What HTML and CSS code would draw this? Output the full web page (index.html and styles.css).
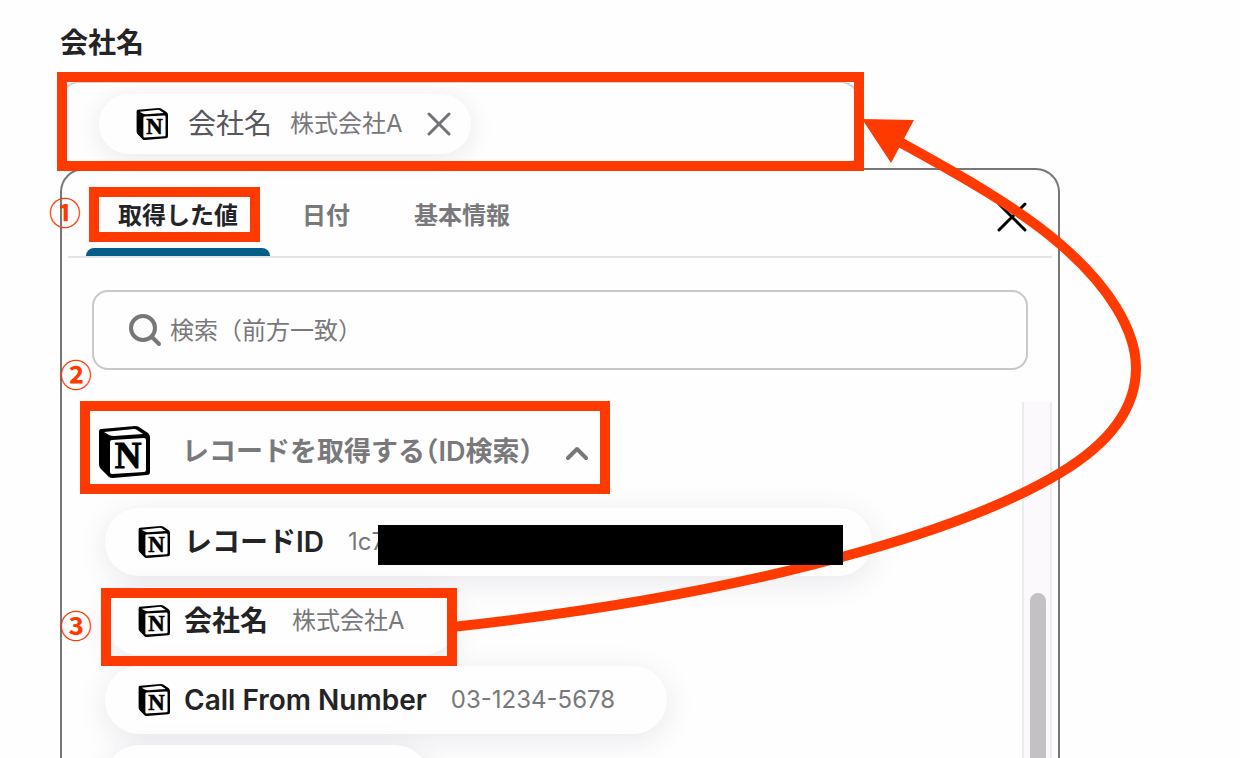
FILE: index.html
```html
<!DOCTYPE html>
<html lang="ja">
<head>
    <meta charset="utf-8">
    <meta name="viewport" content="width=device-width, initial-scale=1">
    <title>会社名</title>
    <link rel="stylesheet" href="styles.css">
</head>
<body>
<svg class="defs" aria-hidden="true">
    <symbol id="icon-notion" viewBox="0 0 52 54">
        <path d="M3 4 L37 1 Q39 1 41 2 L50 8 Q52 10 52 12 L52 47 Q52 50 49 50 L15 53 Q12 53 11 52 L2 43 Q1 41 1 39 L1 7 Q1 4 3 4 Z" fill="#000"/>
        <path d="M6 7 L36 4 Q38 4 39 5 L45 9 L16 11 Q13 11 11 10 Z" fill="#fff"/>
        <path d="M14 15 L46 13 Q48 13 48 15 L48 45 Q48 47 46 47 L14 49 Q12 49 12 47 L12 17 Q12 15 14 15 Z" fill="#fff"/>
        <text x="30" y="43" text-anchor="middle" class="notion-letter">N</text>
    </symbol>
</svg>

<main class="page">
    <div class="form">
        <div class="field-label">会社名</div>

        <div class="field marked">
            <div class="chip">
                <svg class="icon"><use href="#icon-notion"/></svg>
                <span class="chip-name">会社名</span>
                <span class="chip-value">株式会社A</span>
                <button class="icon-btn chip-remove" type="button" aria-label="削除">
                    <svg width="24" height="24" viewBox="0 0 24 24"><path d="M2 2 L22 22 M22 2 L2 22"/></svg>
                </button>
            </div>
        </div>

        <div class="panel">
            <div class="panel-header">
                <div class="tabs">
                    <button class="tab active marked" type="button">取得した値</button>
                    <button class="tab" type="button">日付</button>
                    <button class="tab" type="button">基本情報</button>
                </div>
                <button class="icon-btn panel-close" type="button" aria-label="閉じる">
                    <svg width="30" height="30" viewBox="0 0 30 30"><path d="M2 2 L28 28 M28 2 L2 28"/></svg>
                </button>
            </div>

            <label class="search">
                <svg width="34" height="34" viewBox="0 0 34 34"><circle cx="15" cy="15" r="12"/><path d="M24 24 L31 31"/></svg>
                <input type="text" placeholder="検索（前方一致）" aria-label="検索（前方一致）">
            </label>

            <div class="list">
                <div class="list-body">
                    <button class="group marked" type="button">
                        <svg class="icon-large"><use href="#icon-notion"/></svg>
                        <span class="group-title">レコードを取得する（ID検索）</span>
                        <svg class="chevron" width="24" height="24" viewBox="0 0 24 24"><path d="M3 18 L12 9 L21 18"/></svg>
                    </button>

                    <button class="item" type="button">
                        <svg class="icon"><use href="#icon-notion"/></svg>
                        <span class="item-name">レコードID</span>
                        <span class="item-value">1c7</span>
                        <span class="redacted"></span>
                    </button>
                    <button class="item marked" type="button">
                        <svg class="icon"><use href="#icon-notion"/></svg>
                        <span class="item-name">会社名</span>
                        <span class="item-value">株式会社A</span>
                    </button>
                    <button class="item" type="button">
                        <svg class="icon"><use href="#icon-notion"/></svg>
                        <span class="item-name">Call From Number</span>
                        <span class="item-value">03-1234-5678</span>
                    </button>
                    <div class="item item-next"></div>
                </div>
                <div class="scrollbar"><div class="scrollbar-thumb"></div></div>
            </div>
        </div>
    </div>

    <!-- Annotations -->
    <span class="step step-1">①</span>
    <span class="step step-2">②</span>
    <span class="step step-3">③</span>
    <svg class="arrow" width="1240" height="758" viewBox="0 0 1240 758" aria-hidden="true">
        <path class="arrow-line" d="M452 627 C600 611 740 586 860 552 C960 524 1020 497 1060 473 C1110 443 1136 408 1136 368 C1136 330 1108 285 1060 244 C1020 209 960 175 896 140"/>
        <path class="arrow-head" d="M862 119 L914 120 L891 163 Z"/>
    </svg>
</main>
</body>
</html>
```

FILE: styles.css
```css
* {
    box-sizing: border-box;
}
body {
    margin: 0;
    background: #fefefe;
    color: #242326;
    font-family: Inter, "Noto Sans CJK JP", sans-serif;
}
button {
    margin: 0;
    padding: 0;
    border: none;
    background: none;
    color: inherit;
    font: inherit;
    cursor: pointer;
}
svg {
    flex: none;
}
.defs {
    display: none;
}
.notion-letter {
    font-family: "Liberation Serif", serif;
    font-size: 37px;
    font-weight: bold;
    fill: #000;
    stroke: #000;
    stroke-width: 1;
}

.page {
    position: relative;
    display: flex;
    height: 100vh;
    padding: 23px 60px 0;
    overflow: hidden;
}
.form {
    display: flex;
    flex: 1;
    flex-direction: column;
    max-width: 1000px;
}
.field-label {
    margin-bottom: 18px;
    font-size: 28px;
    font-weight: 600;
    line-height: 40px;
}

/* Input field */
.field {
    display: flex;
    flex: none;
    align-items: center;
    max-width: 800px;
    height: 87px;
    padding: 0 0 2px 37px;
    border: 2px solid #d2d1d4;
    border-radius: 20px;
}
.chip {
    display: flex;
    align-items: center;
    height: 60px;
    padding: 0 20px 0 37px;
    border-radius: 30px;
    background: #fefefe;
    box-shadow: 0 4px 24px rgba(50, 30, 70, 0.1);
    color: #58575b;
    line-height: 32px;
}
.icon {
    width: 32px;
    height: 34px;
}
.chip-name {
    margin: 0 18px 0 20px;
    font-size: 28px;
}
.chip-value {
    margin-right: 24px;
    color: #79787b;
    font-size: 24px;
}
.icon-btn {
    display: flex;
}
.icon-btn svg {
    fill: none;
    stroke: #727175;
    stroke-width: 3;
    stroke-linecap: round;
}

/* Panel */
.panel {
    display: flex;
    flex: 1;
    flex-direction: column;
    min-height: 0;
    border: 2px solid #777679;
    border-bottom: none;
    border-radius: 24px 24px 0 0;
}
.panel-header {
    display: flex;
    flex: none;
    align-items: center;
    justify-content: space-between;
    margin: 0 6px;
    padding: 0 25px 0 18px;
    border-bottom: 2px solid #e5e4e6;
}
.tabs {
    display: flex;
}
.tab {
    position: relative;
    height: 86px;
    padding: 0 32px;
    color: #79787b;
    font-size: 24px;
    font-weight: 600;
    white-space: nowrap;
}
.tab.active {
    color: #242326;
}
.tab.active::before {
    content: "";
    position: absolute;
    right: 0;
    bottom: 0;
    left: 0;
    height: 8px;
    border-radius: 8px 8px 0 0;
    background: #035f87;
}
.panel-close {
    margin-top: 8px;
}
.panel-close svg {
    stroke: #000;
}

.search {
    display: flex;
    flex: none;
    align-items: center;
    gap: 8px;
    height: 80px;
    margin: 32px 30px;
    padding: 0 34px;
    border: 2px solid #c8c7c9;
    border-radius: 16px;
}
.search svg {
    fill: none;
    stroke: #777679;
    stroke-width: 4;
    stroke-linecap: round;
}
.search input {
    flex: 1;
    min-width: 0;
    padding: 0;
    border: none;
    outline: none;
    background: none;
    color: inherit;
    font: inherit;
    font-size: 24px;
}
.search input::placeholder {
    color: #79787b;
}

/* Value list */
.list {
    display: flex;
    flex: 1;
    justify-content: space-between;
    min-height: 0;
    margin-right: 6px;
}
.list-body {
    display: flex;
    flex-direction: column;
    align-items: flex-start;
    gap: 11px;
    padding-left: 43px;
}
.group {
    position: relative;
    display: flex;
    flex: none;
    align-items: center;
    height: 95px;
    margin-left: -7px;
    padding-top: 5px;
    color: #79787b;
    font-size: 27px;
    font-weight: 600;
    line-height: 32px;
    white-space: nowrap;
}
.icon-large {
    width: 52px;
    height: 54px;
}
.group-title {
    margin: 0 32px;
    font-feature-settings: "halt";
}
.chevron {
    fill: none;
    stroke: #777679;
    stroke-width: 4;
    stroke-linecap: round;
    stroke-linejoin: round;
}
.item {
    position: relative;
    display: flex;
    flex: none;
    align-items: center;
    height: 68px;
    padding: 0 52px 0 33px;
    border-radius: 34px;
    background: #fefefe;
    box-shadow: 0 6px 30px rgba(50, 30, 70, 0.1);
    line-height: 32px;
    white-space: nowrap;
}
.item-name {
    margin: 0 24px 0 14px;
    font-size: 28px;
    font-weight: 600;
}
.item-value {
    color: #79787b;
    font-size: 24px;
}
.item-next {
    width: 324px;
}
.redacted {
    position: relative;
    z-index: 4;
    width: 465px;
    height: 40px;
    margin: 6px -23px 0 -7px;
    background: #000;
}
.scrollbar {
    width: 30px;
    padding: 191px 4px 0 6px;
    border: solid #ebeaec;
    border-width: 0 2px;
    background: #fbf9fc;
}
.scrollbar-thumb {
    height: 100%;
    border-radius: 8px 8px 0 0;
    background: #c3c1c4;
}

/* Annotations */
.marked {
    position: relative;
}
.marked::after {
    content: "";
    position: absolute;
    z-index: 2;
    border: 10px solid #ff3a00;
}
.field.marked::after {
    inset: -11px -6px -5px -5px;
}
.tab.marked::after {
    inset: 17px 10px 14px 3px;
}
.group.marked::after {
    inset: -1px -21px 3px -18px;
}
.item.marked::after {
    inset: 1px 0 -11px -4px;
}
.step {
    position: absolute;
    z-index: 2;
    color: #ff3a00;
    font-family: "Noto Sans CJK JP", sans-serif;
    font-size: 32px;
    font-weight: 600;
    line-height: 32px;
}
.step-1 {
    top: 195px;
    left: 49px;
}
.step-2 {
    top: 357px;
    left: 60px;
}
.step-3 {
    top: 608px;
    left: 60px;
}
.arrow {
    position: absolute;
    z-index: 3;
    top: 0;
    left: 0;
    pointer-events: none;
}
.arrow-line {
    fill: none;
    stroke: #ff3a00;
    stroke-width: 10;
}
.arrow-head {
    fill: #ff3a00;
}
```
